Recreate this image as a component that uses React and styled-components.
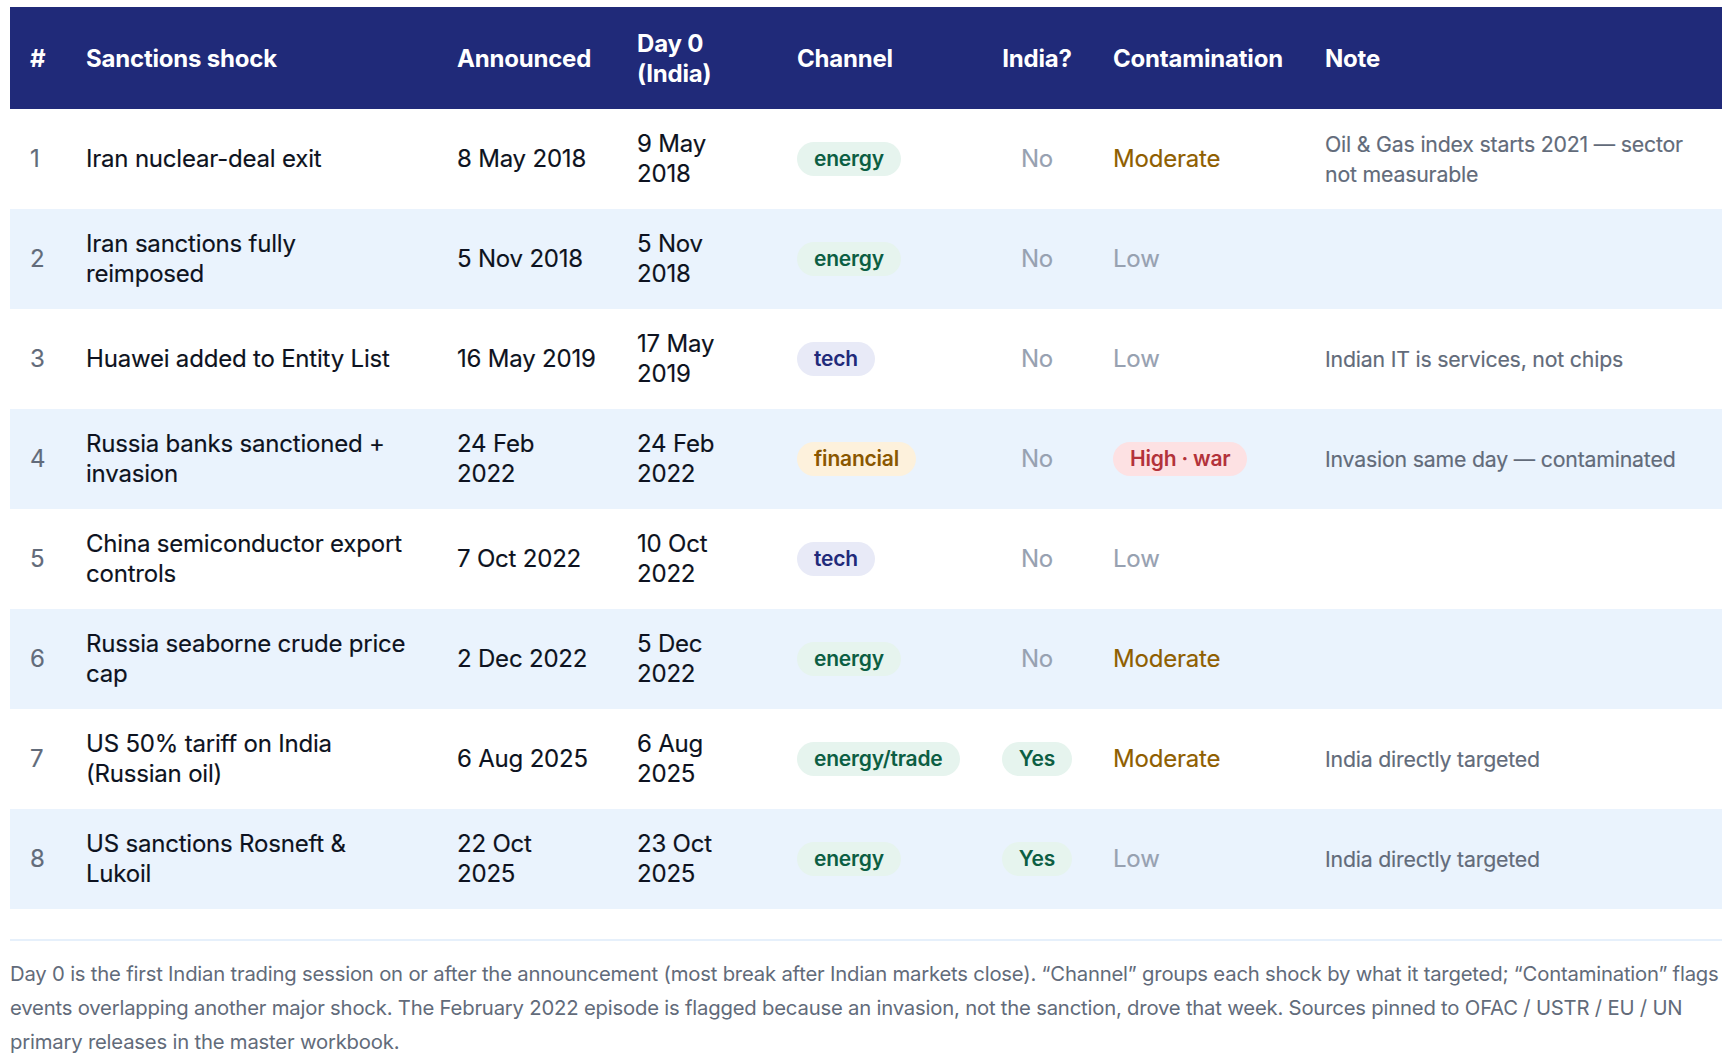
import React from 'react';
import styled, { createGlobalStyle } from 'styled-components';

const color = {
	navy: '#202a79',
	stripe: '#eaf3fd',
	text: '#0d1220',
	muted: '#626b7a',
	faint: '#97a1b1',
	amber: '#8f5e00',
};

const GlobalStyle = createGlobalStyle`
	* { box-sizing: border-box; }
	body {
		margin: 0;
		background: #fff;
		font-family: Inter, "Noto Sans", sans-serif;
		color: ${color.text};
	}
`;

// dates keep the same line breaks the column gives them in the design
const rows = [
	{ n: 1, shock: 'Iran nuclear-deal exit', announced: '8 May 2018', day0: '9 May 2018', channel: 'energy', india: false, contamination: 'Moderate', note: 'Oil & Gas index starts 2021 — sector not measurable' },
	{ n: 2, shock: 'Iran sanctions fully reimposed', announced: '5 Nov 2018', day0: '5 Nov 2018', channel: 'energy', india: false, contamination: 'Low', note: '' },
	{ n: 3, shock: 'Huawei added to Entity List', announced: '16 May 2019', day0: '17 May 2019', channel: 'tech', india: false, contamination: 'Low', note: 'Indian IT is services, not chips' },
	{ n: 4, shock: 'Russia banks sanctioned + invasion', announced: '24 Feb\n2022', day0: '24 Feb 2022', channel: 'financial', india: false, contamination: 'High · war', note: 'Invasion same day — contaminated' },
	{ n: 5, shock: 'China semiconductor export controls', announced: '7 Oct 2022', day0: '10 Oct 2022', channel: 'tech', india: false, contamination: 'Low', note: '' },
	{ n: 6, shock: 'Russia seaborne crude price cap', announced: '2 Dec 2022', day0: '5 Dec 2022', channel: 'energy', india: false, contamination: 'Moderate', note: '' },
	{ n: 7, shock: 'US 50% tariff on India (Russian oil)', announced: '6 Aug 2025', day0: '6 Aug 2025', channel: 'energy/trade', india: true, contamination: 'Moderate', note: 'India directly targeted' },
	{ n: 8, shock: 'US sanctions Rosneft & Lukoil', announced: '22 Oct\n2025', day0: '23 Oct 2025', channel: 'energy', india: true, contamination: 'Low', note: 'India directly targeted' },
];

const tones = {
	green: { bg: '#e6f4ee', fg: '#0c5e43' },
	navy: { bg: '#e8eaf7', fg: '#1f2a7a' },
	amber: { bg: '#fdf1dc', fg: '#8a5700' },
	red: { bg: '#fde1e3', fg: '#b3323a' },
};

const channelTone = (c) => {
	if (c === 'tech') return 'navy';
	if (c === 'financial') return 'amber';
	return 'green';
};

const Contamination = ({ level }) => {
	if (level.startsWith('High')) return <Pill tone="red">{level}</Pill>;
	return <Level $level={level}>{level}</Level>;
};

const App = () => (
	<Page>
		<GlobalStyle />
		<Table>
			<colgroup>
				<col style={{ width: 56 }} />
				<col style={{ width: 371 }} />
				<col style={{ width: 180 }} />
				<col style={{ width: 160 }} />
				<col style={{ width: 204 }} />
				<col style={{ width: 112 }} />
				<col style={{ width: 212 }} />
				<col />
			</colgroup>
			<thead>
				<tr>
					<Th>#</Th>
					<Th>Sanctions shock</Th>
					<Th>Announced</Th>
					<Th>Day 0 (India)</Th>
					<Th>Channel</Th>
					<Th $center>India?</Th>
					<Th>Contamination</Th>
					<Th>Note</Th>
				</tr>
			</thead>
			<tbody>
				{rows.map((r) => (
					<Row key={r.n}>
						<Num>{r.n}</Num>
						<Td>{r.shock}</Td>
						<DateCell>{r.announced}</DateCell>
						<DateCell>{r.day0}</DateCell>
						<Td>
							<Pill tone={channelTone(r.channel)}>{r.channel}</Pill>
						</Td>
						<Td $center>
							{r.india ? <Pill tone="green">Yes</Pill> : <Faint>No</Faint>}
						</Td>
						<Td>
							<Contamination level={r.contamination} />
						</Td>
						<Note>{r.note}</Note>
					</Row>
				))}
			</tbody>
		</Table>
		<Footnote>
			Day 0 is the first Indian trading session on or after the announcement (most break after
			Indian markets close). “Channel” groups each shock by what it targeted; “Contamination”
			flags events overlapping another major shock. The February 2022 episode is flagged because
			an invasion, not the sanction, drove that week. Sources pinned to OFAC / USTR / EU / UN
			primary releases in the master workbook.
		</Footnote>
	</Page>
);

export default App;

const Page = styled.div`
	padding: 7px 10px 0;
`;

const Table = styled.table`
	width: 100%;
	border-collapse: collapse;
	table-layout: fixed;
	font-size: 24px;
	line-height: 30px;
`;

const Th = styled.th`
	background: ${color.navy};
	color: #fff;
	font-weight: 700;
	text-align: ${(p) => (p.$center ? 'center' : 'left')};
	vertical-align: middle;
	padding: 22px 20px 20px;
	line-height: 30px;
	letter-spacing: -0.2px;
`;

const Row = styled.tr`
	&:nth-child(even) {
		background: ${color.stripe};
	}
`;

const Td = styled.td`
	padding: 20px;
	height: 100px;
	vertical-align: middle;
	text-align: ${(p) => (p.$center ? 'center' : 'left')};
	letter-spacing: -0.2px;
	-webkit-text-stroke: 0.15px currentColor;
`;

const DateCell = styled(Td)`
	white-space: pre-line;
`;

const Num = styled(Td)`
	color: ${color.muted};
`;

const Note = styled(Td)`
	color: ${color.muted};
	font-size: 21.3px;
`;

const Faint = styled.span`
	color: ${color.faint};
`;

const Level = styled.span`
	color: ${(p) => (p.$level === 'Moderate' ? color.amber : color.faint)};
`;

const Pill = styled.span`
	display: inline-block;
	padding: 3px 17px;
	border-radius: 999px;
	font-size: 21px;
	line-height: 28px;
	font-weight: 600;
	white-space: nowrap;
	-webkit-text-stroke: 0;
	background: ${(p) => tones[p.tone].bg};
	color: ${(p) => tones[p.tone].fg};
`;

const Footnote = styled.p`
	margin: 30px 0 0;
	padding-top: 16px;
	border-top: 2px solid #e6f0fb;
	color: ${color.muted};
	font-size: 20.3px;
	letter-spacing: -0.2px;
	line-height: 34px;
`;
